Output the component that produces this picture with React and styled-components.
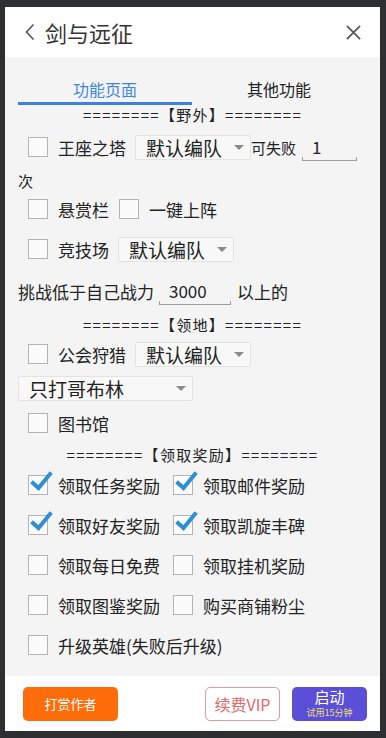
import React from "react";
import styled, { createGlobalStyle } from "styled-components";

const Global = createGlobalStyle`
  html, body {
    margin: 0;
    padding: 0;
    background: #2e2f31;
  }
  body {
    font-family: "Noto Sans CJK SC", "Noto Sans", sans-serif;
    color: #222;
  }
`;

const Frame = styled.div`
  width: 386px;
  height: 738px;
  padding: 7px 6px 7px 5px;
  box-sizing: border-box;
  background: #2e2f31;
`;

const Panel = styled.div`
  height: 724px;
  display: flex;
  flex-direction: column;
  background: #f4f4f5;
  overflow: hidden;
`;

const Header = styled.div`
  height: 50px;
  background: #fff;
  display: flex;
  align-items: center;
  padding: 0 19px 0 20px;
  font-size: 22px;
  color: #333;
  .title {
    flex: 1;
    margin-left: 10px;
  }
`;

const Content = styled.div`
  flex: 1;
  padding: 0 13px;
  display: flex;
  flex-direction: column;
`;

const TabBar = styled.div`
  display: flex;
  padding-top: 20px;
`;

const Tab = styled.div`
  width: 174px;
  display: flex;
  flex-direction: column;
  align-items: center;
  font-size: 16px;
  line-height: 24px;
  color: ${(p) => (p.active ? "#3f86e0" : "#222")};
  &::after {
    content: "";
    display: block;
    margin-top: 1px;
    width: 100%;
    height: 3px;
    background: ${(p) => (p.active ? "#3f7fe0" : "transparent")};
  }
`;

const SectionTitle = styled.div`
  height: ${(p) => p.h}px;
  display: flex;
  align-items: center;
  justify-content: center;
  font-size: 15px;
  letter-spacing: 1.3px;
  color: #222;
  white-space: nowrap;
`;

const Row = styled.div`
  height: ${(p) => p.h}px;
  display: flex;
  align-items: center;
  padding-left: ${(p) => (p.flush ? 0 : 10)}px;
  font-size: 17px;
  white-space: nowrap;
`;

const Box = styled.span`
  position: relative;
  width: 20px;
  height: 20px;
  box-sizing: border-box;
  border: 1px solid #b4b4b4;
  background: #fbfbfb;
  flex: none;
  svg {
    position: absolute;
    left: 1px;
    top: -5px;
  }
`;

const Label = styled.span`
  margin-left: 10px;
  margin-right: ${(p) => p.mr || 0}px;
  font-size: ${(p) => p.size || 17}px;
`;

const Select = styled.div`
  width: ${(p) => p.w}px;
  height: 25px;
  box-sizing: border-box;
  margin-left: ${(p) => p.ml || 0}px;
  background: #f8f8f8;
  border: 1px solid #e3e3e3;
  border-radius: 2px;
  display: flex;
  align-items: center;
  padding: 0 6px 0 10px;
  font-size: 19px;
  .text {
    flex: 1;
  }
  .caret {
    width: 0;
    height: 0;
    border-left: 5px solid transparent;
    border-right: 5px solid transparent;
    border-top: 5px solid #8a8a8a;
  }
`;

const Input = styled.div`
  position: relative;
  width: ${(p) => p.w}px;
  height: 28px;
  margin-left: ${(p) => p.ml || 0}px;
  box-sizing: border-box;
  padding-left: ${(p) => p.pl || 10}px;
  border-bottom: 1px solid #9d9d9d;
  font-size: 17px;
  line-height: 28px;
  &::before,
  &::after {
    content: "";
    position: absolute;
    bottom: -1px;
    width: 1px;
    height: 4px;
    background: #9d9d9d;
  }
  &::before {
    left: 0;
  }
  &::after {
    right: 0;
  }
`;

const Small = styled.span`
  font-size: ${(p) => p.size || 15}px;
  margin-left: ${(p) => p.ml || 0}px;
`;

const RewardGrid = styled.div`
  display: grid;
  grid-template-columns: 145px 1fr;
  grid-auto-rows: 40px;
  padding-left: 10px;
`;

const Cell = styled.div`
  display: flex;
  align-items: center;
  font-size: 17px;
  white-space: nowrap;
  grid-column: ${(p) => (p.wide ? "1 / 3" : "auto")};
`;

const Footer = styled.div`
  height: 55px;
  background: #fff;
  display: flex;
  align-items: center;
  padding: 0 13px 0 18px;
  box-sizing: border-box;
`;

const Button = styled.div`
  width: ${(p) => p.w}px;
  height: 34px;
  box-sizing: border-box;
  border-radius: 5px;
  display: flex;
  flex-direction: column;
  align-items: center;
  justify-content: center;
  margin-left: ${(p) => p.ml || 0}px;
  background: ${(p) => p.bg};
  color: ${(p) => p.color};
  border: ${(p) => (p.outline ? `1px solid ${p.outline}` : "none")};
  font-size: ${(p) => p.size}px;
  .main {
    display: block;
    line-height: 16px;
  }
  .sub {
    display: block;
    margin-top: 3px;
    font-size: 9px;
    line-height: 10px;
    color: #f3df6e;
  }
`;

const Check = ({ checked }) => (
  <Box>
    {checked && (
      <svg width="24" height="22" viewBox="0 0 24 22">
        <path
          d="M3 12 L8.5 17 L20 3"
          fill="none"
          stroke="#2f8fd4"
          strokeWidth="4"
          strokeLinecap="square"
        />
      </svg>
    )}
  </Box>
);

const rewards = [
  ["领取任务奖励", true],
  ["领取邮件奖励", true],
  ["领取好友奖励", true],
  ["领取凯旋丰碑", true],
  ["领取每日免费", false],
  ["领取挂机奖励", false],
  ["领取图鉴奖励", false],
  ["购买商铺粉尘", false],
];

export default function App() {
  return (
    <Frame>
      <Global />
      <Panel>
        <Header>
          <svg width="10" height="18" viewBox="0 0 10 18">
            <path d="M8.5 1.5 L1.5 9 L8.5 16.5" fill="none" stroke="#555" strokeWidth="1.6" />
          </svg>
          <span className="title">剑与远征</span>
          <svg width="15" height="15" viewBox="0 0 16 16">
            <path d="M1 1 L15 15 M15 1 L1 15" stroke="#555" strokeWidth="1.8" />
          </svg>
        </Header>
        <Content>
          <TabBar>
            <Tab active>功能页面</Tab>
            <Tab>其他功能</Tab>
          </TabBar>
          <SectionTitle h={18}>========【野外】========</SectionTitle>
          <Row h={48}>
            <Check />
            <Label mr={9}>王座之塔</Label>
            <Select w={116}>
              <span className="text">默认编队</span>
              <span className="caret" />
            </Select>
            <Small>可失败</Small>
            <Input w={55} ml={6}>1</Input>
          </Row>
          <Row h={18} flush>
            <Small>次</Small>
          </Row>
          <Row h={40}>
            <Check />
            <Label mr={10}>悬赏栏</Label>
            <Check />
            <Label>一键上阵</Label>
          </Row>
          <Row h={40}>
            <Check />
            <Label mr={9}>竞技场</Label>
            <Select w={116}>
              <span className="text">默认编队</span>
              <span className="caret" />
            </Select>
          </Row>
          <Row h={44} flush>
            <span>挑战低于自己战力</span>
            <Input w={72} ml={5}>3000</Input>
            <Small size={17} ml={6}>以上的</Small>
          </Row>
          <SectionTitle h={22}>========【领地】========</SectionTitle>
          <Row h={38}>
            <Check />
            <Label mr={9}>公会狩猎</Label>
            <Select w={116}>
              <span className="text">默认编队</span>
              <span className="caret" />
            </Select>
          </Row>
          <Row h={30} flush>
            <Select w={175}>
              <span className="text">只打哥布林</span>
              <span className="caret" />
            </Select>
          </Row>
          <Row h={40}>
            <Check />
            <Label>图书馆</Label>
          </Row>
          <SectionTitle h={22}>========【领取奖励】========</SectionTitle>
          <RewardGrid>
            {rewards.map(([t, c]) => (
              <Cell key={t}>
                <Check checked={c} />
                <Label>{t}</Label>
              </Cell>
            ))}
            <Cell wide>
              <Check />
              <Label>升级英雄(失败后升级)</Label>
            </Cell>
          </RewardGrid>
        </Content>
        <Footer>
          <Button w={95} bg="#ff6c0a" color="#fff" size={13}>
            打赏作者
          </Button>
          <Button w={75} ml={87} bg="#fff" color="#e06b6b" outline="#e39a9a" size={16}>
            续费VIP
          </Button>
          <Button w={75} ml={12} bg="#5b4fd8" color="#fff" size={15}>
            <span className="main">启动</span>
            <span className="sub">试用15分钟</span>
          </Button>
        </Footer>
      </Panel>
    </Frame>
  );
}
